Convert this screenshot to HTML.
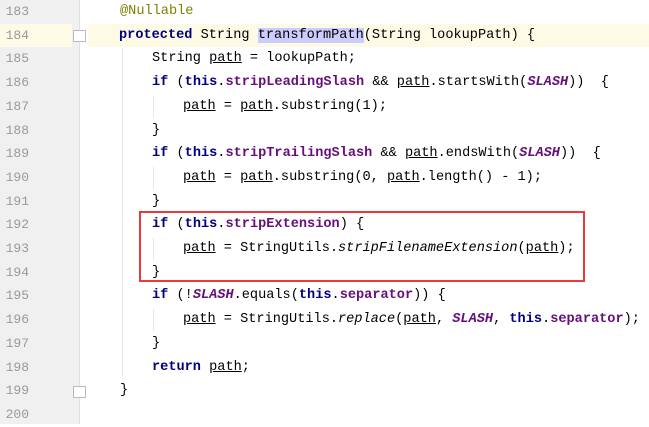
<html><head><style>
body{margin:0;width:649px;height:424px;overflow:hidden;background:#fff;position:relative;font-family:"Liberation Mono","Noto Sans CJK SC",monospace;font-size:13.6px;color:#000}
.g{position:absolute;left:0;top:0;width:79px;height:424px;background:#f0f0f0;border-right:1px solid #e0e0e0}
.l{position:absolute;left:0;height:23.7px;line-height:23.7px;white-space:pre;width:649px}
.n{position:absolute;left:0;width:29px;text-align:right;color:#999;font-size:13px}
.c{position:absolute}
.k{color:#000080;font-weight:bold}
.f{color:#660e7a;font-weight:bold}
.s{color:#660e7a;font-weight:bold;font-style:italic}
.i{font-style:italic}
.a{color:#808000}
.u{text-decoration:underline}
.h{background:#ccccff}
.hl{position:absolute;top:23.7px;height:23.7px;background:#fdfbe6}
.ig{position:absolute;width:1px;background:#e8e8e8}
.box{position:absolute;left:139px;top:211px;width:442px;height:67px;border:2px solid #e83a3a}
.fold{position:absolute;left:73px;width:11px;height:10px;border:1px solid #bbb;background:#fff}
</style></head><body>
<div class="g"></div>
<div class="hl" style="left:0;width:72px"></div>
<div class="hl" style="left:88px;width:561px"></div>
<div class="ig" style="left:122px;top:48px;height:328px"></div>
<div class="ig" style="left:153px;top:96px;height:22px"></div>
<div class="ig" style="left:153px;top:167px;height:22px"></div>
<div class="ig" style="left:153px;top:238px;height:22px"></div>
<div class="ig" style="left:153px;top:309px;height:22px"></div>
<div class="fold" style="top:30px"></div>
<div class="fold" style="top:386px"></div>
<div class="l" style="top:0"><span class="n">183</span><span class="c a" style="left:120px">@Nullable</span></div>
<div class="l" style="top:23.7px"><span class="n">184</span><span class="c" style="left:119px"><span class="k">protected</span> String <span class="h">transformPath</span>(String lookupPath) {</span></div>
<div class="l" style="top:47.4px"><span class="n">185</span><span class="c" style="left:152px">String <span class="u">path</span> = lookupPath;</span></div>
<div class="l" style="top:71.1px"><span class="n">186</span><span class="c" style="left:152px"><span class="k">if</span> (<span class="k">this</span>.<span class="f">stripLeadingSlash</span> &amp;&amp; <span class="u">path</span>.startsWith(<span class="s">SLASH</span>))  {</span></div>
<div class="l" style="top:94.8px"><span class="n">187</span><span class="c" style="left:183px"><span class="u">path</span> = <span class="u">path</span>.substring(1);</span></div>
<div class="l" style="top:118.5px"><span class="n">188</span><span class="c" style="left:152px">}</span></div>
<div class="l" style="top:142.2px"><span class="n">189</span><span class="c" style="left:152px"><span class="k">if</span> (<span class="k">this</span>.<span class="f">stripTrailingSlash</span> &amp;&amp; <span class="u">path</span>.endsWith(<span class="s">SLASH</span>))  {</span></div>
<div class="l" style="top:165.9px"><span class="n">190</span><span class="c" style="left:183px"><span class="u">path</span> = <span class="u">path</span>.substring(0, <span class="u">path</span>.length() - 1);</span></div>
<div class="l" style="top:189.6px"><span class="n">191</span><span class="c" style="left:152px">}</span></div>
<div class="l" style="top:213.3px"><span class="n">192</span><span class="c" style="left:152px"><span class="k">if</span> (<span class="k">this</span>.<span class="f">stripExtension</span>) {</span></div>
<div class="l" style="top:237px"><span class="n">193</span><span class="c" style="left:183px"><span class="u">path</span> = StringUtils.<span class="i">stripFilenameExtension</span>(<span class="u">path</span>);</span></div>
<div class="l" style="top:260.7px"><span class="n">194</span><span class="c" style="left:152px">}</span></div>
<div class="l" style="top:284.4px"><span class="n">195</span><span class="c" style="left:152px"><span class="k">if</span> (!<span class="s">SLASH</span>.equals(<span class="k">this</span>.<span class="f">separator</span>)) {</span></div>
<div class="l" style="top:308.1px"><span class="n">196</span><span class="c" style="left:183px"><span class="u">path</span> = StringUtils.<span class="i">replace</span>(<span class="u">path</span>, <span class="s">SLASH</span>, <span class="k">this</span>.<span class="f">separator</span>);</span></div>
<div class="l" style="top:331.8px"><span class="n">197</span><span class="c" style="left:152px">}</span></div>
<div class="l" style="top:355.5px"><span class="n">198</span><span class="c" style="left:152px"><span class="k">return</span> <span class="u">path</span>;</span></div>
<div class="l" style="top:379.2px"><span class="n">199</span><span class="c" style="left:120px">}</span></div>
<div class="l" style="top:402.9px"><span class="n">200</span></div>
<div class="box"></div>
</body></html>
